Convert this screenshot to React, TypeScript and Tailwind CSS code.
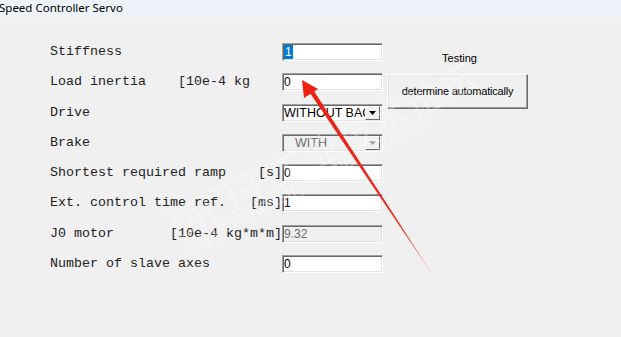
import type { ReactNode } from "react";

const mono = { fontFamily: '"Liberation Mono", "Courier New", monospace' };
const sans = { fontFamily: '"Liberation Sans", Arial, sans-serif' };

type Row = { label: string; unit?: string; field: ReactNode };

function Sunken({ children, disabled }: { children: ReactNode; disabled?: boolean }) {
  return (
    <div
      className={`flex h-[18px] w-[101px] items-center border border-t-[#a0a0a0] border-l-[#a0a0a0] border-b-[#ffffff] border-r-[#ffffff] shadow-[inset_1px_1px_0_#696969,inset_-1px_-1px_0_#e3e3e3] ${
        disabled ? "bg-[#f0f0f0] text-[#6d6d6d]" : "bg-white text-black"
      }`}
    >
      {children}
    </div>
  );
}

function TextBox({ value, selected, disabled }: { value: string; selected?: boolean; disabled?: boolean }) {
  return (
    <Sunken disabled={disabled}>
      <span className="pl-[1px] text-[12px] leading-[14px]" style={sans}>
        {selected ? <span className="bg-[#0078d7] px-[1px] text-white">{value}</span> : value}
      </span>
    </Sunken>
  );
}

function Combo({ value, disabled }: { value: string; disabled?: boolean }) {
  return (
    <Sunken disabled={disabled}>
      <span
        className={`flex-1 overflow-hidden whitespace-nowrap text-[12.5px] leading-[14px] ${disabled ? "pl-[12px]" : "pl-[1px]"}`}
        style={sans}
      >
        {value}
      </span>
      <span className="mr-[2px] flex h-[14px] w-[15px] items-center justify-center border border-t-[#ffffff] border-l-[#ffffff] border-b-[#696969] border-r-[#696969] bg-[#f0f0f0]">
        <svg width="7" height="4" viewBox="0 0 7 4">
          <polygon points="0,0 7,0 3.5,4" fill={disabled ? "#a0a0a0" : "#000"} />
        </svg>
      </span>
    </Sunken>
  );
}

const rows: Row[] = [
  { label: "Stiffness", field: <TextBox value="1" selected /> },
  { label: "Load inertia    [10e-4 kg", field: <TextBox value="0" /> },
  { label: "Drive", field: <Combo value="WITHOUT BACKLASH" /> },
  { label: "Brake", field: <Combo value="WITH" disabled /> },
  { label: "Shortest required ramp", unit: "[s]", field: <TextBox value="0" /> },
  { label: "Ext. control time ref.", unit: "[ms]", field: <TextBox value="1" /> },
  { label: "J0 motor", unit: "[10e-4 kg*m*m]", field: <TextBox value="9.32" disabled /> },
  { label: "Number of slave axes", field: <TextBox value="0" /> },
];

export default function App() {
  return (
    <div className="relative h-[337px] w-[621px] overflow-hidden bg-[#f0f0f0]">
      <div className="h-[17px] bg-[#eef3fa] text-[11.5px] leading-[16px] text-black" style={{ fontFamily: '"Noto Sans", sans-serif' }}>
        <span className="ml-[-1px]">Speed Controller Servo</span>
      </div>

      <div className="flex pt-[26px]">
        <div className="flex flex-col gap-[12.3px] pl-[50px]">
          {rows.map((row) => (
            <div key={row.label} className="flex h-[18px] items-center">
              <div className="flex w-[232px] overflow-hidden whitespace-pre text-[13.33px] leading-[14px] text-[#222]" style={mono}>
                <span className="flex-1 overflow-hidden">{row.label}</span>
                {row.unit && <span>{row.unit}</span>}
              </div>
              {row.field}
            </div>
          ))}
        </div>

        <div className="ml-[4px] flex flex-col items-center pt-[9px]">
          <div className="pl-[4px] text-[11px] leading-[13px] text-black" style={sans}>
            Testing
          </div>
          <button
            className="mt-[9px] flex h-[35px] w-[141px] items-center justify-center border border-t-[#ffffff] border-l-[#ffffff] border-b-[#696969] border-r-[#696969] bg-[#f0f0f0] text-[11px] tracking-[-0.2px] text-black shadow-[inset_-1px_-1px_0_#a0a0a0,inset_1px_1px_0_#e3e3e3]"
            style={sans}
          >
            determine automatically
          </button>
        </div>
      </div>

      {/* watermark */}
      <div
        className="pointer-events-none absolute left-[160px] top-[208px] origin-top-left -rotate-[27deg] whitespace-nowrap text-[36px] leading-[40px] text-white/30 tracking-[2px]"
        style={{ fontFamily: '"Noto Sans CJK SC", sans-serif' }}
      >
        西门子工业技术论坛
      </div>
      <div
        className="pointer-events-none absolute left-[180px] top-[238px] origin-top-left -rotate-[28deg] whitespace-nowrap text-[19px] leading-[22px] text-white/35"
        style={sans}
      >
        support.industry.siemens.com/cs
      </div>

      {/* red arrow */}
      <svg className="pointer-events-none absolute left-0 top-0" width="621" height="337">
        <defs>
          <linearGradient id="fade" x1="302" y1="80" x2="440" y2="286" gradientUnits="userSpaceOnUse">
            <stop offset="0" stopColor="#f02010" />
            <stop offset="0.7" stopColor="#e82818" />
            <stop offset="1" stopColor="#f02010" stopOpacity="0" />
          </linearGradient>
        </defs>
        <polygon points="308,90 312,88 440,286" fill="url(#fade)" />
        <polygon points="302,80 318,89 304,98" fill="#f02010" />
      </svg>
    </div>
  );
}
